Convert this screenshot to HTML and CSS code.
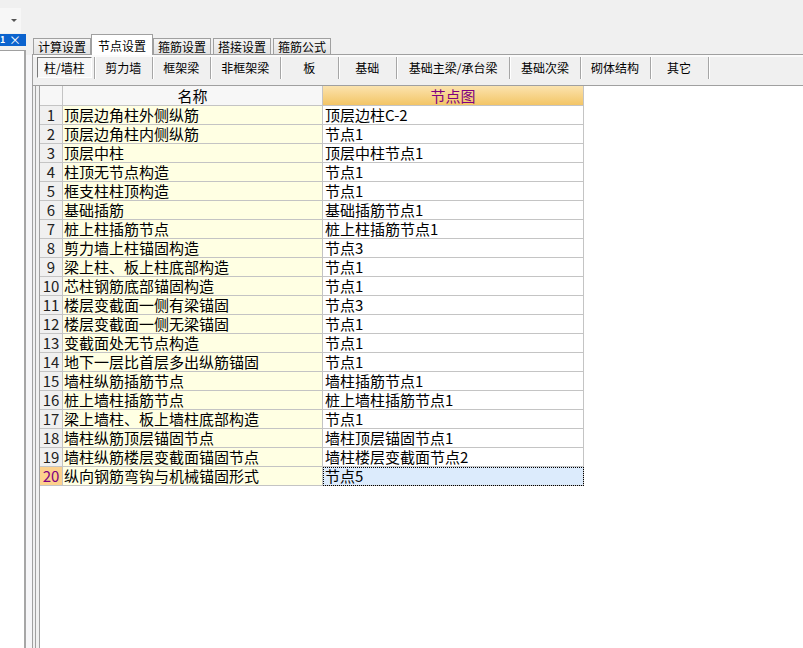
FILE: index.html
```html
<!DOCTYPE html>
<html lang="zh-CN">
<head>
<meta charset="utf-8">
<title>节点设置</title>
<link rel="stylesheet" href="styles.css">
</head>
<body>
<div class="app">
  <aside class="side">
    <div class="combo"><span class="combo-arrow"></span></div>
    <div class="pane-head"><span class="pane-num">1</span><span class="pane-close">×</span></div>
    <div class="pane-body"></div>
  </aside>
  <div class="splitter"></div>
  <section class="tabctl">
    <div class="tabs">
      <div class="tab">计算设置</div>
      <div class="tab active">节点设置</div>
      <div class="tab">箍筋设置</div>
      <div class="tab">搭接设置</div>
      <div class="tab">箍筋公式</div>
    </div>
    <div class="tabpage">
      <div class="subtabs">
        <div class="sub first"><span class="pressed">柱/墙柱</span></div>
        <div class="sub">剪力墙</div>
        <div class="sub">框架梁</div>
        <div class="sub">非框架梁</div>
        <div class="sub">板</div>
        <div class="sub">基础</div>
        <div class="sub wide">基础主梁/承台梁</div>
        <div class="sub">基础次梁</div>
        <div class="sub">砌体结构</div>
        <div class="sub">其它</div>
      </div>
      <div class="gridframe">
        <div class="grid">
          <div class="sheet">
            <div class="c h"></div><div class="c h">名称</div><div class="c h hl">节点图</div>
            <div class="c num">1</div><div class="c name">顶层边角柱外侧纵筋</div><div class="c node">顶层边柱C-2</div>
            <div class="c num">2</div><div class="c name">顶层边角柱内侧纵筋</div><div class="c node">节点1</div>
            <div class="c num">3</div><div class="c name">顶层中柱</div><div class="c node">顶层中柱节点1</div>
            <div class="c num">4</div><div class="c name">柱顶无节点构造</div><div class="c node">节点1</div>
            <div class="c num">5</div><div class="c name">框支柱柱顶构造</div><div class="c node">节点1</div>
            <div class="c num">6</div><div class="c name">基础插筋</div><div class="c node">基础插筋节点1</div>
            <div class="c num">7</div><div class="c name">桩上柱插筋节点</div><div class="c node">桩上柱插筋节点1</div>
            <div class="c num">8</div><div class="c name">剪力墙上柱锚固构造</div><div class="c node">节点3</div>
            <div class="c num">9</div><div class="c name">梁上柱、板上柱底部构造</div><div class="c node">节点1</div>
            <div class="c num">10</div><div class="c name">芯柱钢筋底部锚固构造</div><div class="c node">节点1</div>
            <div class="c num">11</div><div class="c name">楼层变截面一侧有梁锚固</div><div class="c node">节点3</div>
            <div class="c num">12</div><div class="c name">楼层变截面一侧无梁锚固</div><div class="c node">节点1</div>
            <div class="c num">13</div><div class="c name">变截面处无节点构造</div><div class="c node">节点1</div>
            <div class="c num">14</div><div class="c name">地下一层比首层多出纵筋锚固</div><div class="c node">节点1</div>
            <div class="c num">15</div><div class="c name">墙柱纵筋插筋节点</div><div class="c node">墙柱插筋节点1</div>
            <div class="c num">16</div><div class="c name">桩上墙柱插筋节点</div><div class="c node">桩上墙柱插筋节点1</div>
            <div class="c num">17</div><div class="c name">梁上墙柱、板上墙柱底部构造</div><div class="c node">节点1</div>
            <div class="c num">18</div><div class="c name">墙柱纵筋顶层锚固节点</div><div class="c node">墙柱顶层锚固节点1</div>
            <div class="c num">19</div><div class="c name">墙柱纵筋楼层变截面锚固节点</div><div class="c node">墙柱楼层变截面节点2</div>
            <div class="c num sel">20</div><div class="c name">纵向钢筋弯钩与机械锚固形式</div><div class="c node sel">节点5</div>
          </div>
        </div>
      </div>
    </div>
  </section>
</div>
</body>
</html>
```
FILE: styles.css
```css
* { box-sizing: border-box; }
html, body { margin: 0; padding: 0; }
body {
  background: #f0f0f0;
  font-family: "Noto Sans CJK SC", "Noto Sans", sans-serif;
  font-size: 12px;
  color: #000;
}
.app {
  width: 803px;
  height: 648px;
  overflow: hidden;
  display: flex;
  background: #f0f0f0;
}

/* left docked pane */
.side {
  width: 26px;
  flex: none;
  display: flex;
  flex-direction: column;
  padding-top: 8px;
}
.combo {
  position: relative;
  width: 21px;
  height: 25px;
  background: #f7f7f7;
}
.combo-arrow {
  position: absolute;
  left: 11px;
  top: 11px;
  width: 0;
  height: 0;
  border-left: 3px solid transparent;
  border-right: 3px solid transparent;
  border-top: 3px solid #555;
}
.pane-head {
  margin-top: 1px;
  height: 12px;
  background: #0b63ce;
  color: #fff;
  display: flex;
  justify-content: space-between;
  align-items: center;
  font-size: 11px;
  line-height: 12px;
}
.pane-num { margin-left: 0; font-weight: bold; font-size: 9px; }
.pane-close { margin-right: 5px; font-size: 12px; }
.pane-body {
  margin-top: 4px;
  flex: 1;
  background: #fff;
  border-top: 1px solid #a0a0a0;
  border-right: 2px solid #a6a6a6;
}
.splitter {
  width: 6px;
  flex: none;
  background: #f6f6f8;
  margin-top: 55px;
}

/* tab control */
.tabctl {
  flex: 1;
  display: flex;
  flex-direction: column;
  padding-top: 34px;
  min-width: 0;
}
.tabs {
  height: 20px;
  display: flex;
  align-items: flex-end;
  padding-left: 1px;
}
.tab {
  height: 16px;
  padding: 1px 4px 0;
  margin-right: 2px;
  border: 1px solid #a0a0a0;
  border-bottom: none;
  background: linear-gradient(#f4f4f4, #e3e3e3);
  line-height: 14px;
  white-space: nowrap;
}
.tab.active {
  position: relative;
  z-index: 1;
  height: 21px;
  margin: 0 0 -1px -2px;
  padding: 3px 6px 0;
  background: #fff;
  line-height: 15px;
}
.tabpage {
  flex: 1;
  display: flex;
  flex-direction: column;
  border-top: 1px solid #a0a0a0;
  border-left: 1px solid #a0a0a0;
}
.subtabs {
  height: 31px;
  display: flex;
  align-items: flex-start;
  padding-left: 2px;
  border-top: 2px solid #fbfbfb;
  border-bottom: 1px solid #a0a0a0;
}
.sub {
  height: 22px;
  min-width: 58px;
  padding: 0 10.5px;
  border-right: 1px solid #a6a6a6;
  box-shadow: 1px 0 0 #fff;
  text-align: center;
  line-height: 22px;
  white-space: nowrap;
}
.sub.wide { padding: 0 12px; }
.sub.first {
  min-width: 0;
  padding: 0 2px;
}
.pressed {
  display: block;
  height: 21px;
  padding: 0 6px;
  border-top: 1px solid #7a7a7a;
  border-left: 1px solid #7a7a7a;
  border-right: 1px solid #fff;
  border-bottom: 1px solid #fff;
  background: #f7f7f7;
  line-height: 19px;
}

/* grid */
.gridframe {
  flex: 1;
  display: flex;
  margin-left: 2px;
  padding-left: 3px;
  border-left: 1px solid #a0a0a0;
}
.grid {
  flex: 1;
  background: #fff;
  border-left: 1px solid #a0a0a0;
}
.sheet {
  display: grid;
  grid-template-columns: 23px 260px 261px;
  grid-template-rows: 20px;
  grid-auto-rows: 19px;
  width: 544px;
}
.c {
  border-right: 1px solid #c4c4c4;
  border-bottom: 1px solid #c4c4c4;
  font-size: 15px;
  line-height: 18px;
  white-space: nowrap;
}
.h {
  background: #f7f7f7;
  text-align: center;
  line-height: 19px;
}
.h.hl {
  background: linear-gradient(#fbe3ae, #f3c566);
  color: #800080;
}
.num {
  background: #f0f0f0;
  text-align: center;
  color: #222;
}
.num.sel {
  background: #fdd18d;
  color: #800080;
}
.name {
  background: #ffffe3;
  padding-left: 1px;
}
.node {
  background: #fff;
  padding-left: 2px;
}
.node.sel {
  background: #dcebfc;
  outline: 1px dotted #000;
  outline-offset: -1px;
}
```
